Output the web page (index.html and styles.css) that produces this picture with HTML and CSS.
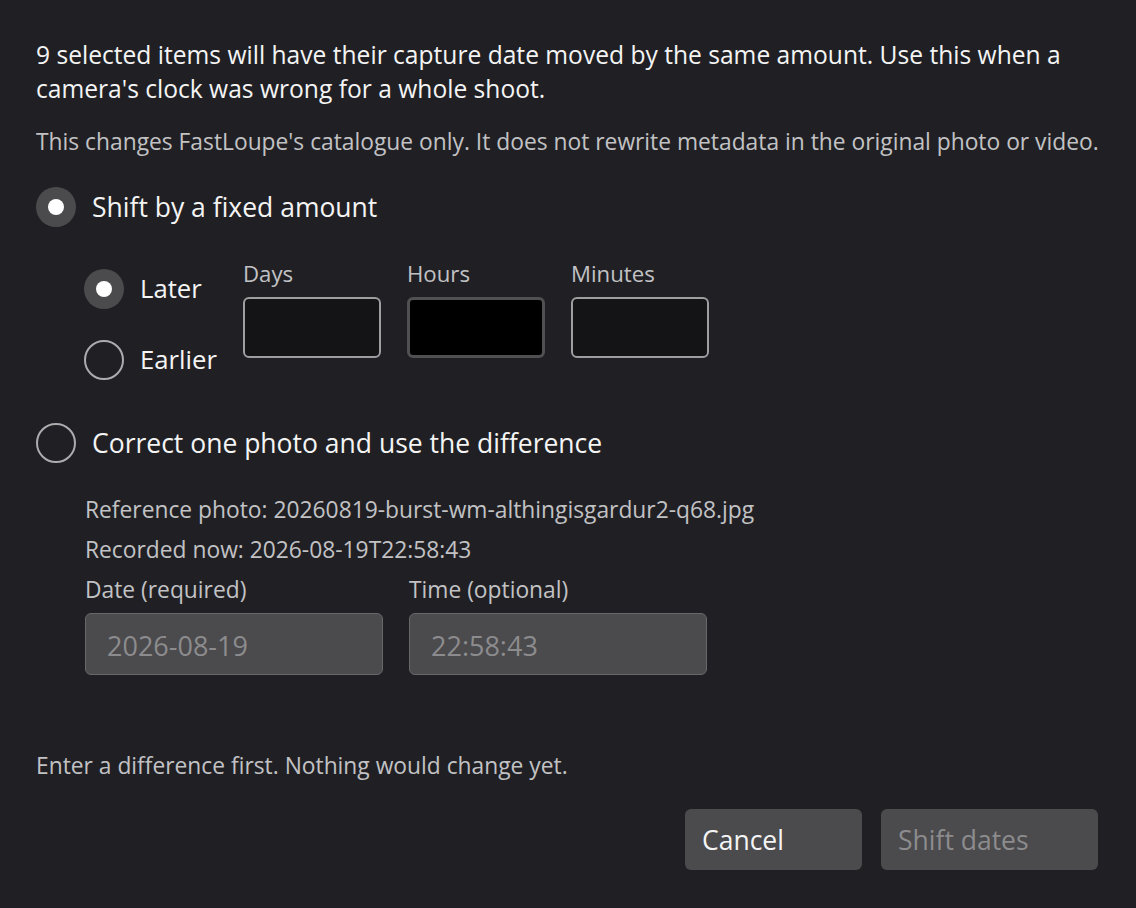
FILE: index.html
```html
<!DOCTYPE html>
<html lang="en">

<head>
	<meta charset="utf-8">
	<meta name="viewport" content="width=device-width, initial-scale=1">
	<title>Shift capture dates</title>
	<link rel="stylesheet" href="styles.css">
</head>

<body>
	<div class="dialog">
		<p class="intro">9 selected items will have their capture date moved by the same amount. Use this when a camera's clock was wrong for a whole shoot.</p>
		<p class="note">This changes FastLoupe's catalogue only. It does not rewrite metadata in the original photo or video.</p>

		<label class="option">
			<input type="radio" name="mode" checked>
			<span>Shift by a fixed amount</span>
		</label>

		<div class="shift-body">
			<div class="direction">
				<label class="option small">
					<input type="radio" name="dir" checked>
					<span>Later</span>
				</label>
				<label class="option small">
					<input type="radio" name="dir">
					<span>Earlier</span>
				</label>
			</div>
			<div class="field">
				<label class="field-label">Days</label>
				<input class="num-input" type="text">
			</div>
			<div class="field">
				<label class="field-label">Hours</label>
				<input class="num-input focused" type="text">
			</div>
			<div class="field">
				<label class="field-label">Minutes</label>
				<input class="num-input" type="text">
			</div>
		</div>

		<label class="option correct">
			<input type="radio" name="mode">
			<span>Correct one photo and use the difference</span>
		</label>

		<div class="ref-body">
			<p class="info">Reference photo: 20260819-burst-wm-althingisgardur2-q68.jpg</p>
			<p class="info">Recorded now: 2026-08-19T22:58:43</p>
			<div class="ref-fields">
				<div class="field">
					<label class="info">Date (required)</label>
					<input class="ref-input" type="text" value="2026-08-19" disabled>
				</div>
				<div class="field">
					<label class="info">Time (optional)</label>
					<input class="ref-input" type="text" value="22:58:43" disabled>
				</div>
			</div>
		</div>

		<p class="status">Enter a difference first. Nothing would change yet.</p>

		<div class="actions">
			<button class="btn cancel">Cancel</button>
			<button class="btn" disabled>Shift dates</button>
		</div>
	</div>
</body>

</html>
```

FILE: styles.css
```css
:root {
	--bg-color:          #202024;
	--text-color:        #f4f4f4;
	--muted-text-color:  #c2c2c4;
	--dim-text-color:    #8c8c8e;
	--control-color:     #4b4a4d;
	--ring-color:        #acacae;
}
* {
	margin: 0;
	padding: 0;
	box-sizing: border-box;
}
body {
	background-color: var(--bg-color);
	color: var(--text-color);
	font-family: "Open Sans", "Noto Sans", sans-serif;
}
.dialog {
	padding: 38px 38px 0 36px;
}
.intro {
	font-size: 24.6px;
	line-height: 34px;
}
.note {
	margin-top: 21px;
	font-size: 22.8px;
	line-height: 30px;
	color: var(--muted-text-color);
	white-space: nowrap;
}

/* radios */
.option {
	display: flex;
	align-items: center;
	gap: 16px;
	margin-top: 30px;
	font-size: 26.5px;
	line-height: 40px;
}
.option input {
	appearance: none;
	width: 40px;
	height: 40px;
	border-radius: 50%;
	border: 2px solid var(--ring-color);
	display: flex;
	align-items: center;
	justify-content: center;
	flex-shrink: 0;
}
.option input:checked {
	border: 0;
	background-color: var(--control-color);
}
.option input:checked::after {
	content: "";
	width: 16px;
	height: 16px;
	border-radius: 50%;
	background-color: #ffffff;
}
.option.small {
	font-size: 25.7px;
}
.option.correct {
	margin-top: 43px;
}

.shift-body {
	display: flex;
	align-items: flex-start;
	gap: 26px;
	margin-top: 34px;
	padding-left: 48px;
}
.direction {
	width: 133px;
	display: flex;
	flex-direction: column;
	gap: 31px;
	padding-top: 8px;
}
.direction .option {
	margin-top: 0;
}
.field {
	display: flex;
	flex-direction: column;
}
.field-label {
	font-size: 22.2px;
	line-height: 26px;
	margin-bottom: 10px;
	color: var(--muted-text-color);
}
.num-input {
	width: 138px;
	height: 61px;
	border: 2px solid #9e9ea0;
	border-radius: 6px;
	background-color: #141417;
	outline: none;
}
.num-input.focused {
	border: 3px solid #505052;
	background-color: #000000;
}

.ref-body {
	margin-top: 27px;
	padding-left: 49px;
}
.info {
	font-size: 22.8px;
	line-height: 40px;
	color: var(--muted-text-color);
}
.ref-fields {
	display: flex;
	gap: 26px;
}
.ref-input {
	width: 298px;
	height: 62px;
	margin-top: 3px;
	padding: 3px 0 0 21px;
	border: 1px solid #68686b;
	border-radius: 6px;
	background-color: var(--control-color);
	color: var(--dim-text-color);
	font-family: inherit;
	font-size: 27px;
}

.status {
	margin-top: 76px;
	font-size: 22.8px;
	line-height: 30px;
	color: var(--muted-text-color);
}
.actions {
	display: flex;
	justify-content: flex-end;
	gap: 19px;
	margin-top: 28px;
}
.btn {
	height: 61px;
	padding: 0 17px;
	border: 0;
	border-radius: 6px;
	background-color: var(--control-color);
	color: var(--dim-text-color);
	font-family: inherit;
	font-size: 26.5px;
	text-align: left;
}
.btn.cancel {
	width: 177px;
	color: var(--text-color);
}
.btn[disabled] {
	width: 217px;
}
```
